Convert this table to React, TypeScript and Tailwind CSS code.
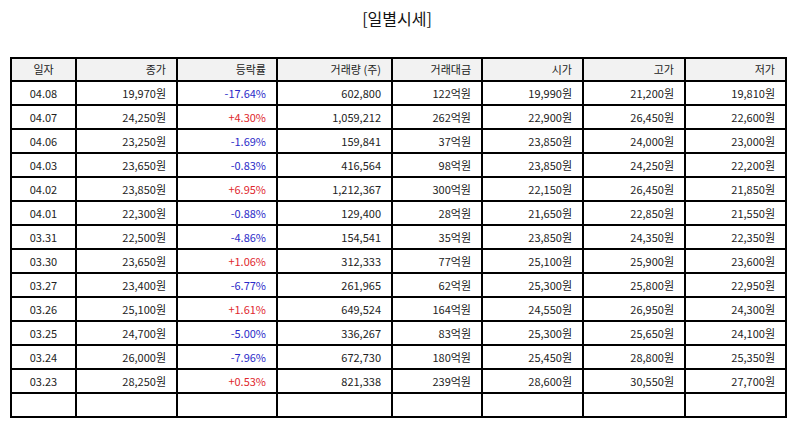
type Row = {
  date: string;
  close: string;
  rate: string;
  volume: string;
  amount: string;
  open: string;
  high: string;
  low: string;
};

const rows: Row[] = [
  { date: "04.08", close: "19,970원", rate: "-17.64%", volume: "602,800", amount: "122억원", open: "19,990원", high: "21,200원", low: "19,810원" },
  { date: "04.07", close: "24,250원", rate: "+4.30%", volume: "1,059,212", amount: "262억원", open: "22,900원", high: "26,450원", low: "22,600원" },
  { date: "04.06", close: "23,250원", rate: "-1.69%", volume: "159,841", amount: "37억원", open: "23,850원", high: "24,000원", low: "23,000원" },
  { date: "04.03", close: "23,650원", rate: "-0.83%", volume: "416,564", amount: "98억원", open: "23,850원", high: "24,250원", low: "22,200원" },
  { date: "04.02", close: "23,850원", rate: "+6.95%", volume: "1,212,367", amount: "300억원", open: "22,150원", high: "26,450원", low: "21,850원" },
  { date: "04.01", close: "22,300원", rate: "-0.88%", volume: "129,400", amount: "28억원", open: "21,650원", high: "22,850원", low: "21,550원" },
  { date: "03.31", close: "22,500원", rate: "-4.86%", volume: "154,541", amount: "35억원", open: "23,850원", high: "24,350원", low: "22,350원" },
  { date: "03.30", close: "23,650원", rate: "+1.06%", volume: "312,333", amount: "77억원", open: "25,100원", high: "25,900원", low: "23,600원" },
  { date: "03.27", close: "23,400원", rate: "-6.77%", volume: "261,965", amount: "62억원", open: "25,300원", high: "25,800원", low: "22,950원" },
  { date: "03.26", close: "25,100원", rate: "+1.61%", volume: "649,524", amount: "164억원", open: "24,550원", high: "26,950원", low: "24,300원" },
  { date: "03.25", close: "24,700원", rate: "-5.00%", volume: "336,267", amount: "83억원", open: "25,300원", high: "25,650원", low: "24,100원" },
  { date: "03.24", close: "26,000원", rate: "-7.96%", volume: "672,730", amount: "180억원", open: "25,450원", high: "28,800원", low: "25,350원" },
  { date: "03.23", close: "28,250원", rate: "+0.53%", volume: "821,338", amount: "239억원", open: "28,600원", high: "30,550원", low: "27,700원" },
];

const cell = "border-2 border-black px-[10px] h-[24px] text-right";
const head = "border-2 border-black px-[10px] h-[23px] text-right font-normal";

export default function App() {
  return (
    <div className="w-[794px] h-[425px] bg-white text-[#222] text-[11px] font-['Noto_Sans_CJK_KR','Noto_Sans',sans-serif] overflow-hidden">
      <h1 className="pt-[6px] h-[50px] text-center text-[16px] leading-[24px] text-[#111]">[일별시세]</h1>
      <div className="px-[10px] pt-[7px]">
        <table className="w-[775px] border-collapse table-fixed leading-none">
          <colgroup>
            <col className="w-[65px]" />
            <col className="w-[101px]" />
            <col className="w-[100px]" />
            <col className="w-[115px]" />
            <col className="w-[90px]" />
            <col className="w-[101px]" />
            <col className="w-[102px]" />
            <col className="w-[101px]" />
          </colgroup>
          <thead>
            <tr className="bg-[#f2f2f2]">
              <th className="border-2 border-black h-[23px] font-normal text-center">일자</th>
              <th className={head}>종가</th>
              <th className={head}>등락률</th>
              <th className={head}>거래량 (주)</th>
              <th className={head}>거래대금</th>
              <th className={head}>시가</th>
              <th className={head}>고가</th>
              <th className={head}>저가</th>
            </tr>
          </thead>
          <tbody>
            {rows.map((r) => (
              <tr key={r.date}>
                <td className="border-2 border-black h-[24px] text-center">{r.date}</td>
                <td className={cell}>{r.close}</td>
                <td className={`${cell} ${r.rate.startsWith("+") ? "text-[#e0282e]" : "text-[#2b2bc8]"}`}>{r.rate}</td>
                <td className={cell}>{r.volume}</td>
                <td className={cell}>{r.amount}</td>
                <td className={cell}>{r.open}</td>
                <td className={cell}>{r.high}</td>
                <td className={cell}>{r.low}</td>
              </tr>
            ))}
            <tr>
              <td className="border-2 border-black h-[24px]"></td>
              <td className={cell}></td>
              <td className={cell}></td>
              <td className={cell}></td>
              <td className={cell}></td>
              <td className={cell}></td>
              <td className={cell}></td>
              <td className={cell}></td>
            </tr>
          </tbody>
        </table>
      </div>
    </div>
  );
}
